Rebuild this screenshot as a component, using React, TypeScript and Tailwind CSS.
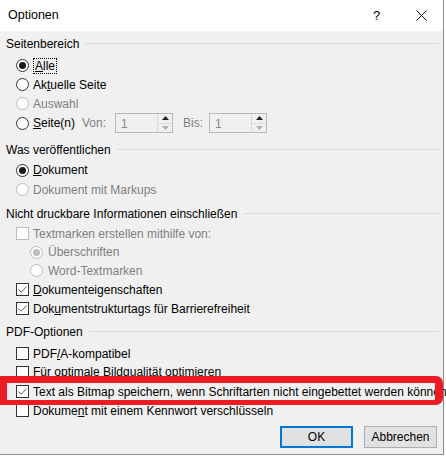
import * as React from "react";

const font = { fontFamily: '"Liberation Sans", Arial, sans-serif' };

function Radio({ checked = false, disabled = false }: { checked?: boolean; disabled?: boolean }) {
  return (
    <span
      className={`flex h-[13px] w-[13px] shrink-0 items-center justify-center rounded-full border bg-white ${
        disabled ? "border-[#bcbcbc]" : "border-[#333333]"
      }`}
    >
      {checked ? (
        <span className={`h-[7px] w-[7px] rounded-full ${disabled ? "bg-[#bcbcbc]" : "bg-[#1a1a1a]"}`} />
      ) : null}
    </span>
  );
}

function Check({ checked = false, disabled = false }: { checked?: boolean; disabled?: boolean }) {
  return (
    <span
      className={`flex h-[13px] w-[13px] shrink-0 items-center justify-center border bg-white ${
        disabled ? "border-[#bcbcbc]" : "border-[#333333]"
      }`}
    >
      {checked ? (
        <svg width="11" height="11" viewBox="0 0 11 11">
          <path d="M1.5 5.5 L4.2 8.2 L9.6 2.6" fill="none" stroke="#444444" strokeWidth="0.9" />
        </svg>
      ) : null}
    </span>
  );
}

function Heading({ children, className = "" }: { children: React.ReactNode; className?: string }) {
  return (
    <div className={`flex h-[19px] items-center pl-[6px] pr-[4px] ${className}`}>
      <span className="text-[12px] text-black">{children}</span>
      <span className="ml-[6px] h-px flex-1 bg-[#dcdcdc]" />
    </div>
  );
}

function Row({
  children,
  label,
  disabled = false,
  indent = false,
  className = "h-[19px]",
}: {
  children: React.ReactNode;
  label: React.ReactNode;
  disabled?: boolean;
  indent?: boolean;
  className?: string;
}) {
  return (
    <div className={`flex items-center ${indent ? "pl-[30px]" : "pl-[16px]"} ${className}`}>
      {children}
      <span
        className={`whitespace-nowrap text-[12px] ${indent ? "ml-[5px]" : "ml-[4px]"} ${
          disabled ? "text-[#7f7f7f]" : "text-black"
        }`}
      >
        {label}
      </span>
    </div>
  );
}

function Spin({ value }: { value: string }) {
  return (
    <div className="flex h-[20px] w-[58px] border border-[#b9b9b9] bg-[#f0f0f0]">
      <span className="flex-1 pl-[5px] pt-[3px] text-[12px] leading-[14px] text-[#8a8a8a]">{value}</span>
      <div className="flex w-[15px] flex-col border-l border-[#dadada]">
        <div className="flex flex-1 items-center justify-center border-b border-[#dadada]">
          <svg width="7" height="4" viewBox="0 0 7 4">
            <path d="M0 4 L3.5 0 L7 4 Z" fill="#222222" />
          </svg>
        </div>
        <div className="flex flex-1 items-center justify-center">
          <svg width="7" height="4" viewBox="0 0 7 4">
            <path d="M0 0 L7 0 L3.5 4 Z" fill="#b0b0b0" />
          </svg>
        </div>
      </div>
    </div>
  );
}

export default function App() {
  return (
    <div className="h-[459px] w-[446px] overflow-hidden bg-white" style={font}>
      <div className="relative flex h-[455px] w-[444px] flex-col border-b border-r border-[#8c8c8c] bg-[#f0f0f0]">
        {/* title bar */}
        <div className="flex h-[31px] shrink-0 items-center bg-white pl-[8px]">
          <span className="flex-1 text-[12.5px] text-black">Optionen</span>
          <span className="w-[8px] text-[13px] text-black">?</span>
          <span className="ml-[34px] mr-[16px] flex w-[12px] items-center justify-center">
            <svg width="11" height="11" viewBox="0 0 11 11">
              <path d="M0.5 0.5 L10.5 10.5 M10.5 0.5 L0.5 10.5" stroke="#111111" strokeWidth="1" />
            </svg>
          </span>
        </div>

        <div className="flex flex-col pt-[3px]">
          <Heading>Seitenbereich</Heading>
          <Row
            className="mt-[3px] h-[19px]"
            label={
              <span className="border border-dotted border-black px-px">
                <u>A</u>lle
              </span>
            }
          >
            <Radio checked />
          </Row>
          <Row label={<>Ak<u>t</u>uelle Seite</>}>
            <Radio />
          </Row>
          <Row label="Auswahl" disabled>
            <Radio disabled />
          </Row>
          <div className="flex h-[20px] items-center pl-[16px]">
            <Radio />
            <span className="ml-[4px] w-[49px] whitespace-nowrap text-[12px] text-black">
              <u>S</u>eite(n)
            </span>
            <span className="w-[33px] text-[12px] text-[#7f7f7f]">Von:</span>
            <Spin value="1" />
            <span className="ml-[10px] w-[26px] text-[12px] text-[#7f7f7f]">Bis:</span>
            <Spin value="1" />
          </div>

          <Heading className="mt-[7px]">Was veröffentlichen</Heading>
          <Row className="mt-px h-[20px]" label={<><u>D</u>okument</>}>
            <Radio checked />
          </Row>
          <Row label="Dokument mit Markups" disabled>
            <Radio disabled />
          </Row>

          <Heading className="mt-[5px]">Nicht druckbare Informationen einschließen</Heading>
          <Row className="mt-px h-[19px]" label="Textmarken erstellen mithilfe von:" disabled>
            <Check disabled />
          </Row>
          <Row className="h-[18px]" indent label="Überschriften" disabled>
            <Radio checked disabled />
          </Row>
          <Row indent label="Word-Textmarken" disabled>
            <Radio disabled />
          </Row>
          <Row label={<><u>D</u>okumenteigenschaften</>}>
            <Check checked />
          </Row>
          <Row label={<>Dok<u>u</u>mentstrukturtags für Barrierefreiheit</>}>
            <Check checked />
          </Row>

          <Heading className="mt-[4px]">PDF-Optionen</Heading>
          <Row className="mt-[3px] h-[19px]" label={<>PDF<u>/</u>A-kompatibel</>}>
            <Check />
          </Row>
          <Row className="h-[18px]" label="Für optimale Bildqualität optimieren">
            <Check />
          </Row>
          <Row className="mt-px h-[19px]" label="Text als Bitmap speichern, wenn Schriftarten nicht eingebettet werden können">
            <Check checked />
          </Row>
          <Row label={<>Dokume<u>n</u>t mit einem Kennwort verschlüsseln</>}>
            <Check />
          </Row>

          <div className="mt-[6px] flex justify-end gap-[11px] pr-[6px]">
            <button className="h-[22px] w-[73px] border-2 border-[#0078d7] bg-[#e1e1e1] text-[12px] text-black">
              OK
            </button>
            <button className="h-[22px] w-[73px] border border-[#adadad] bg-[#e1e1e1] text-[12px] text-black">
              Abbrechen
            </button>
          </div>
        </div>

        {/* red highlight annotation */}
        <div className="pointer-events-none absolute left-0 top-[376px] h-[29px] w-[443px] rounded-r-[7px] border-b-[5px] border-l-[7px] border-r-[8px] border-t-[7px] border-[#ed1c24]" />
      </div>
    </div>
  );
}
